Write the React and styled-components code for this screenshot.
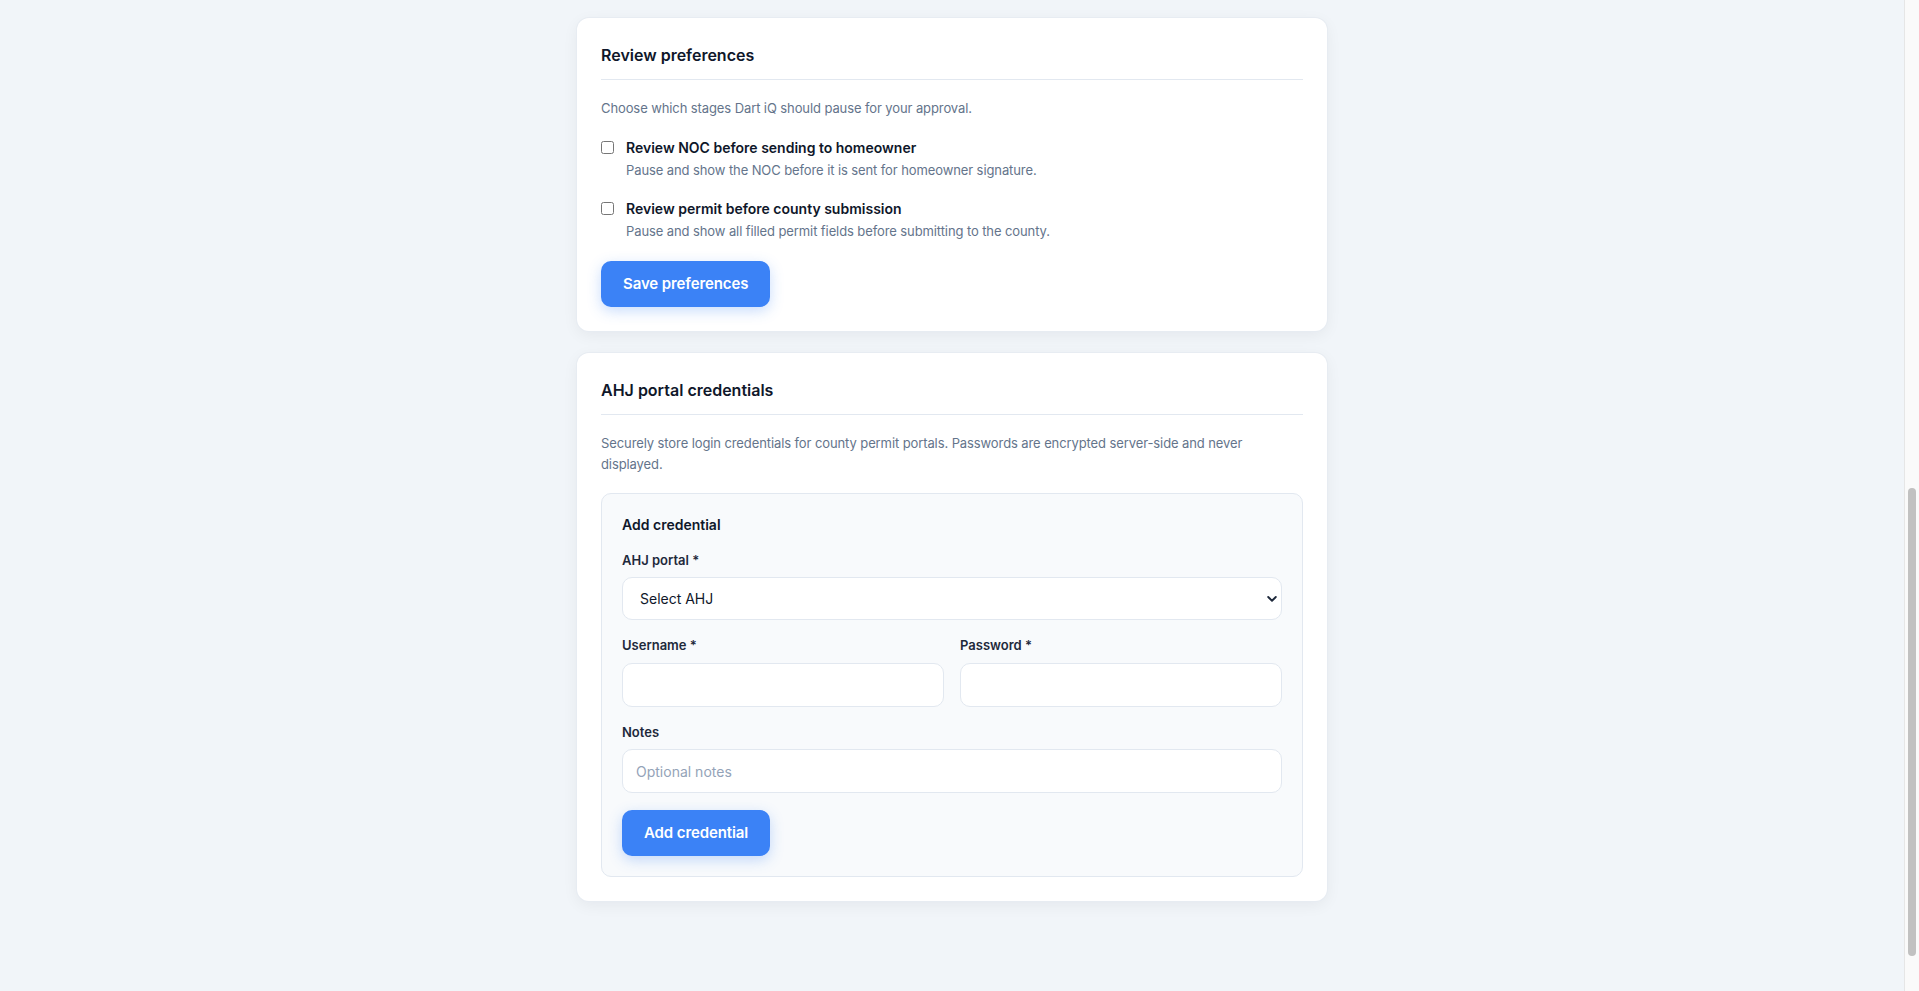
import React, { useState } from "react";
import styled, { createGlobalStyle } from "styled-components";

const GlobalStyle = createGlobalStyle`
  body {
    margin: 0;
    background: #f1f5f9;
    font-family: Inter, "Noto Sans", "Liberation Sans", sans-serif;
    color: #0f172a;
    -webkit-font-smoothing: antialiased;
  }
  * {
    box-sizing: border-box;
  }
`;

/* Window chrome: the vertical scroll rail pinned to the right edge */
const ScrollRail = styled.div`
  position: fixed;
  top: 0;
  right: 0;
  bottom: 0;
  width: 15px;
  background: #fafafa;
  border-left: 1px solid #e6e6e6;
  z-index: 10;
`;

const ScrollThumb = styled.div`
  position: absolute;
  left: 3px;
  top: 488px;
  width: 8px;
  height: 468px;
  border-radius: 4px;
  background: #c1c1c1;
`;

const Page = styled.main`
  display: flex;
  flex-direction: column;
  align-items: center;
  gap: 22px;
  padding: 18px 15px 90px 0;
`;

const Card = styled.section`
  width: 750px;
  background: #ffffff;
  border-radius: 12px;
  padding: 24px;
  box-shadow: 0 0 0 1px #e7ecf2, 0 4px 16px rgba(15, 23, 42, 0.06);
`;

const CardTitle = styled.h2`
  margin: 0 0 18px;
  padding-bottom: 10px;
  border-bottom: 1px solid #e2e8f0;
  font-size: 16px;
  line-height: 27px;
  font-weight: 600;
  color: #0f172a;
`;

const Description = styled.p`
  margin: 0 0 18px;
  font-size: 13px;
  line-height: 20.8px;
  letter-spacing: -0.1px;
  color: #64748b;
`;

const OptionList = styled.div`
  display: flex;
  flex-direction: column;
  gap: 17px;
  margin-bottom: 20px;
`;

const OptionRow = styled.label`
  display: flex;
  align-items: flex-start;
  gap: 12px;
  cursor: pointer;
`;

const Checkbox = styled.input.attrs({ type: "checkbox" })`
  flex: none;
  width: 13px;
  height: 13px;
  margin: 4px 0 0;
`;

const OptionText = styled.div`
  display: flex;
  flex-direction: column;
  gap: 2px;
`;

const OptionLabel = styled.span`
  font-size: 14px;
  line-height: 21px;
  font-weight: 600;
  color: #0f172a;
`;

const OptionHint = styled.span`
  font-size: 13px;
  line-height: 20.8px;
  letter-spacing: -0.1px;
  color: #64748b;
`;

const PrimaryButton = styled.button`
  display: inline-block;
  margin-top: ${(p) => p.$offset || 0}px;
  padding: 12px 22px;
  border: none;
  border-radius: 10px;
  background: #3b82f6;
  color: #ffffff;
  font-family: inherit;
  font-size: 15px;
  line-height: 22px;
  font-weight: 600;
  letter-spacing: -0.1px;
  cursor: pointer;
  box-shadow: 0 4px 14px rgba(59, 130, 246, 0.28);
`;

const Panel = styled.div`
  background: #f8fafc;
  border: 1px solid #e2e8f0;
  border-radius: 10px;
  padding: 20px;
`;

const PanelTitle = styled.h3`
  margin: 0 0 16px;
  font-size: 14px;
  line-height: 21px;
  font-weight: 600;
  color: #0f172a;
`;

const Field = styled.div`
  display: flex;
  flex-direction: column;
  gap: 7px;
  margin-bottom: 16px;
`;

const FieldRow = styled.div`
  display: grid;
  grid-template-columns: 1fr 1fr;
  gap: 16px;
`;

const FieldLabel = styled.label`
  font-size: 13px;
  line-height: 19.5px;
  font-weight: 600;
  color: #1e293b;
`;

const TextInput = styled.input`
  width: 100%;
  height: 44px;
  padding: 12px 13px;
  border: 1px solid #e2e8f0;
  border-radius: 10px;
  background: #ffffff;
  font-family: inherit;
  font-size: 14px;
  color: #0f172a;
  outline: none;

  &::placeholder {
    color: #94a3b8;
  }
`;

const SelectWrap = styled.div`
  position: relative;
`;

const Select = styled.select`
  width: 100%;
  height: 43px;
  padding: 0 30px 0 17px;
  border: 1px solid #e2e8f0;
  border-radius: 10px;
  background: #ffffff;
  font-family: inherit;
  font-size: 14px;
  color: #0f172a;
  appearance: none;
  -webkit-appearance: none;
  outline: none;
`;

const Chevron = styled.svg`
  position: absolute;
  right: 5px;
  top: 50%;
  width: 10px;
  height: 7px;
  transform: translateY(-50%);
  pointer-events: none;
`;

export default function App() {
  const [reviewNoc, setReviewNoc] = useState(false);
  const [reviewPermit, setReviewPermit] = useState(false);

  return (
    <>
      <GlobalStyle />
      <Page>
        <Card>
          <CardTitle>Review preferences</CardTitle>
          <Description>Choose which stages Dart iQ should pause for your approval.</Description>
          <OptionList>
            <OptionRow>
              <Checkbox checked={reviewNoc} onChange={(e) => setReviewNoc(e.target.checked)} />
              <OptionText>
                <OptionLabel>Review NOC before sending to homeowner</OptionLabel>
                <OptionHint>Pause and show the NOC before it is sent for homeowner signature.</OptionHint>
              </OptionText>
            </OptionRow>
            <OptionRow>
              <Checkbox checked={reviewPermit} onChange={(e) => setReviewPermit(e.target.checked)} />
              <OptionText>
                <OptionLabel>Review permit before county submission</OptionLabel>
                <OptionHint>Pause and show all filled permit fields before submitting to the county.</OptionHint>
              </OptionText>
            </OptionRow>
          </OptionList>
          <PrimaryButton type="button">Save preferences</PrimaryButton>
        </Card>

        <Card>
          <CardTitle>AHJ portal credentials</CardTitle>
          <Description>
            Securely store login credentials for county permit portals. Passwords are encrypted server-side and never
            displayed.
          </Description>
          <Panel>
            <PanelTitle>Add credential</PanelTitle>
            <Field>
              <FieldLabel htmlFor="ahj">AHJ portal *</FieldLabel>
              <SelectWrap>
                <Select id="ahj" defaultValue="">
                  <option value="">Select AHJ</option>
                </Select>
                <Chevron viewBox="0 0 10 7" aria-hidden="true">
                  <path d="M1.2 1.5 L5 5.2 L8.8 1.5" fill="none" stroke="#1e293b" strokeWidth="1.9" strokeLinecap="round" strokeLinejoin="round" />
                </Chevron>
              </SelectWrap>
            </Field>
            <FieldRow>
              <Field>
                <FieldLabel htmlFor="user">Username *</FieldLabel>
                <TextInput id="user" type="text" />
              </Field>
              <Field>
                <FieldLabel htmlFor="pass">Password *</FieldLabel>
                <TextInput id="pass" type="password" />
              </Field>
            </FieldRow>
            <Field>
              <FieldLabel htmlFor="notes">Notes</FieldLabel>
              <TextInput id="notes" type="text" placeholder="Optional notes" />
            </Field>
            <PrimaryButton type="button" $offset={1}>Add credential</PrimaryButton>
          </Panel>
        </Card>
      </Page>
      <ScrollRail>
        <ScrollThumb />
      </ScrollRail>
    </>
  );
}
